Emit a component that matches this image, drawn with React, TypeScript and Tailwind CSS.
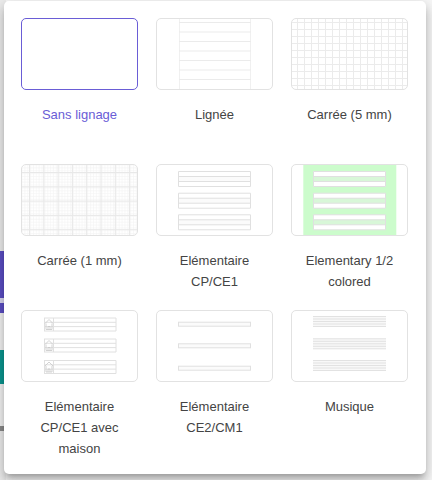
import React from "react";

const GRID = "#ebebeb";
const LINE = "#e0e0e0";

function Thumb({ selected, children }: { selected?: boolean; children?: React.ReactNode }) {
  return (
    <div
      className={
        "shrink-0 w-[117px] h-[72px] rounded-[5px] border overflow-hidden bg-white " +
        (selected ? "border-[#6a5dd6]" : "border-[#e2e2e2]")
      }
    >
      <svg width="115" height="70" viewBox="1 1 115 70" className="block">
        {children}
      </svg>
    </div>
  );
}

function Lignee() {
  const ys = [4.5, 14, 23.5, 33, 42.5, 52, 61.5];
  return (
    <g>
      <line x1={23.5} y1={0} x2={23.5} y2={72} stroke="#f0f0f0" />
      <line x1={94.5} y1={0} x2={94.5} y2={72} stroke="#f0f0f0" />
      {ys.map((y) => (
        <line key={y} x1={23} y1={y} x2={95} y2={y} stroke={GRID} />
      ))}
    </g>
  );
}

function Square5() {
  const xs: number[] = [];
  for (let x = 6.5; x < 117; x += 7) xs.push(x);
  const ys: number[] = [];
  for (let y = 4.5; y < 72; y += 7) ys.push(y);
  return (
    <g>
      {xs.map((x) => (
        <line key={"x" + x} x1={x} y1={0} x2={x} y2={72} stroke={GRID} />
      ))}
      {ys.map((y) => (
        <line key={"y" + y} x1={0} y1={y} x2={117} y2={y} stroke={GRID} />
      ))}
    </g>
  );
}

function Square1() {
  const minorX: number[] = [];
  for (let x = 1; x < 117; x += 2.86) minorX.push(x);
  const minorY: number[] = [];
  for (let y = 1; y < 72; y += 2.86) minorY.push(y);
  const majorX: number[] = [];
  for (let x = 8.5; x < 117; x += 14.3) majorX.push(x);
  const majorY: number[] = [];
  for (let y = 8.5; y < 72; y += 14.3) majorY.push(y);
  return (
    <g>
      {minorX.map((x) => (
        <line key={"mx" + x} x1={x} y1={0} x2={x} y2={72} stroke="#f3f3f3" strokeWidth={0.6} />
      ))}
      {minorY.map((y) => (
        <line key={"my" + y} x1={0} y1={y} x2={117} y2={y} stroke="#f3f3f3" strokeWidth={0.6} />
      ))}
      {majorX.map((x) => (
        <line key={"x" + x} x1={x} y1={0} x2={x} y2={72} stroke="#e8e8e8" />
      ))}
      {majorY.map((y) => (
        <line key={"y" + y} x1={0} y1={y} x2={117} y2={y} stroke="#e8e8e8" />
      ))}
    </g>
  );
}

function Elementary({ colored }: { colored?: boolean }) {
  const tops = [7, 28.7, 50.3];
  return (
    <g>
      {colored && <rect x={12.3} y={0} width={93} height={72} fill="#ccfccc" />}
      {tops.map((t) => (
        <g key={t}>
          <rect x={22.5} y={t + 0.5} width={72} height={5} fill="#ffffff" />
          <rect x={22.5} y={t + 5.5} width={72} height={5} fill={colored ? "#d8f7d8" : "#fbfbfb"} />
          <rect x={22.5} y={t + 10.5} width={72} height={5} fill="#ffffff" />
          {[0.5, 5.5, 10.5, 15.5].map((d) => (
            <line key={d} x1={22.5} y1={t + d} x2={94.5} y2={t + d} stroke={LINE} />
          ))}
          <line x1={22.5} y1={t + 0.5} x2={22.5} y2={t + 15.5} stroke={LINE} />
          <line x1={94.5} y1={t + 0.5} x2={94.5} y2={t + 15.5} stroke={LINE} />
        </g>
      ))}
    </g>
  );
}

function Maison() {
  const tops = [7.5, 28.5, 50];
  return (
    <g>
      {tops.map((t) => (
        <g key={t}>
          {[0.5, 4.8, 9.1, 13.5].map((d) => (
            <line key={d} x1={23} y1={t + d} x2={95} y2={t + d} stroke={LINE} />
          ))}
          <line x1={95} y1={t + 0.5} x2={95} y2={t + 13.5} stroke={LINE} />
          <line x1={23.5} y1={t + 0.5} x2={23.5} y2={t + 13.5} stroke={LINE} />
          <path
            d={`M24 ${t + 6} L28 ${t + 2} L32 ${t + 6} M25 ${t + 6} L25 ${t + 12} L31 ${t + 12} L31 ${t + 6} M27 ${t + 12} L27 ${t + 9} L29 ${t + 9} L29 ${t + 12}`}
            stroke="#c8c8c8"
            strokeWidth={0.8}
            fill="none"
          />
          <line x1={32.5} y1={t + 0.5} x2={32.5} y2={t + 13.5} stroke={LINE} />
        </g>
      ))}
    </g>
  );
}

function CE2() {
  const tops = [11.7, 33.3, 55.7];
  return (
    <g>
      {tops.map((t) => (
        <rect key={t} x={22.5} y={t + 0.5} width={72} height={4} fill="#fbfbfb" stroke={LINE} />
      ))}
    </g>
  );
}

function Musique() {
  const tops = [6, 28.3, 50];
  return (
    <g>
      {tops.map((t) => (
        <g key={t}>
          <rect x={22} y={t} width={73} height={10.5} fill="#f8f8f8" />
          {[0, 2.5, 5, 7.5, 10].map((d) => (
            <line key={d} x1={22} y1={t + d + 0.5} x2={95} y2={t + d + 0.5} stroke="#e2e2e2" />
          ))}
        </g>
      ))}
    </g>
  );
}

const items: { label: string; selected?: boolean; art: React.ReactNode }[] = [
  { label: "Sans lignage", selected: true, art: null },
  { label: "Lignée", art: <Lignee /> },
  { label: "Carrée (5 mm)", art: <Square5 /> },
  { label: "Carrée (1 mm)", art: <Square1 /> },
  { label: "Elémentaire CP/CE1", art: <Elementary /> },
  { label: "Elementary 1/2 colored", art: <Elementary colored /> },
  { label: "Elémentaire CP/CE1 avec maison", art: <Maison /> },
  { label: "Elémentaire CE2/CM1", art: <CE2 /> },
  { label: "Musique", art: <Musique /> },
];

export default function App() {
  return (
    <div
      className="relative w-[432px] h-[480px] overflow-hidden bg-[#f7f7f7]"
      style={{ fontFamily: "'Liberation Sans', Arial, sans-serif" }}
    >
      {/* content under the popup */}
      <div className="flex flex-col w-[6px] h-full">
        <div className="h-[251px] bg-[#ececec]" />
        <div className="h-[47px] bg-[#5b4ec4]" />
        <div className="h-[5px] bg-[#d9d7ef]" />
        <div className="h-[10px] bg-[#5b4ec4]" />
        <div className="h-[37px] bg-[#f2f2f2]" />
        <div className="h-[34px] bg-[#0b968f]" />
        <div className="h-[42px] bg-[#f2f2f2]" />
        <div className="h-[5px] bg-[#8a8a8a]" />
        <div className="flex-1 bg-[#ececec]" />
      </div>

      {/* popup */}
      <div className="absolute left-[4px] top-[1px] w-[422px] h-[473px] bg-white rounded-[5px] shadow-[0_5px_5px_-3px_rgba(0,0,0,0.2),0_8px_10px_1px_rgba(0,0,0,0.14),0_3px_14px_2px_rgba(0,0,0,0.12)] pl-[17px] pt-[17px]">
        <div className="grid grid-cols-[117px_117px_117px] auto-rows-[146px] gap-x-[18px]">
          {items.map((it) => (
            <div key={it.label} className="flex flex-col items-center">
              <Thumb selected={it.selected}>{it.art}</Thumb>
              <div
                className={
                  "shrink-0 mt-[14px] w-[101px] text-center text-[13px] leading-[21px] " +
                  (it.selected ? "text-[#6a5dd6]" : "text-[#444444]")
                }
              >
                {it.label}
              </div>
            </div>
          ))}
        </div>
      </div>
    </div>
  );
}
